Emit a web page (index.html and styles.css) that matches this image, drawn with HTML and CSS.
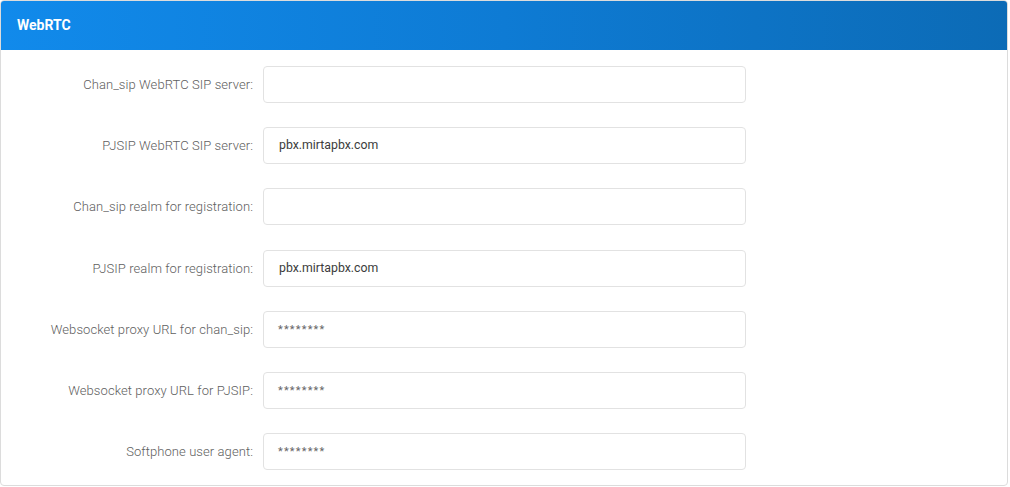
FILE: index.html
```html
<!DOCTYPE html>
<html>
<head>
<meta charset="utf-8">
<link rel="stylesheet" href="styles.css">
</head>
<body>
<div class="card">
  <div class="card-header">WebRTC</div>
  <div class="card-body">
    <div class="row"><label class="lbl">Chan_sip WebRTC SIP server:</label><div class="field"></div></div>
    <div class="row"><label class="lbl">PJSIP WebRTC SIP server:</label><div class="field">pbx.mirtapbx.com</div></div>
    <div class="row"><label class="lbl">Chan_sip realm for registration:</label><div class="field"></div></div>
    <div class="row"><label class="lbl">PJSIP realm for registration:</label><div class="field">pbx.mirtapbx.com</div></div>
    <div class="row"><label class="lbl">Websocket proxy URL for chan_sip:</label><div class="field stars">********</div></div>
    <div class="row"><label class="lbl">Websocket proxy URL for PJSIP:</label><div class="field stars">********</div></div>
    <div class="row"><label class="lbl">Softphone user agent:</label><div class="field stars">********</div></div>
  </div>
</div>
</body>
</html>
```
FILE: styles.css
```css
html, body {
  margin: 0;
  padding: 0;
  background: #ffffff;
}
body {
  font-family: Roboto, "Liberation Sans", sans-serif;
}
.card {
  width: 1008px;
  height: 486px;
  border: 1px solid #dcdcdc;
  border-radius: 4px;
  overflow: hidden;
  box-sizing: border-box;
}
.card-header {
  height: 49px;
  box-sizing: border-box;
  background: linear-gradient(90deg, #118aeb 0%, #0e7bd4 50%, #0c6bb6 100%);
  color: #ffffff;
  font-weight: 700;
  font-size: 14px;
  line-height: 49px;
  padding-left: 16px;
}
.card-body {
  padding-top: 16px;
  display: flex;
  flex-direction: column;
  gap: 24.2px;
}
.row {
  display: grid;
  grid-template-columns: 252px 483px;
  column-gap: 10px;
  align-items: center;
}
.lbl {
  text-align: right;
  font-size: 13px;
  font-weight: 300;
  letter-spacing: 0.08px;
  color: #606060;
}
.field {
  height: 37px;
  box-sizing: border-box;
  border: 1px solid #e2e2e2;
  border-radius: 4px;
  padding-left: 15px;
  font-size: 12.3px;
  line-height: 35px;
  color: #3c3c3c;
}
.stars {
  font-size: 11px;
  color: #666666;
  letter-spacing: 1.2px;
  padding-left: 14px;
}
```
